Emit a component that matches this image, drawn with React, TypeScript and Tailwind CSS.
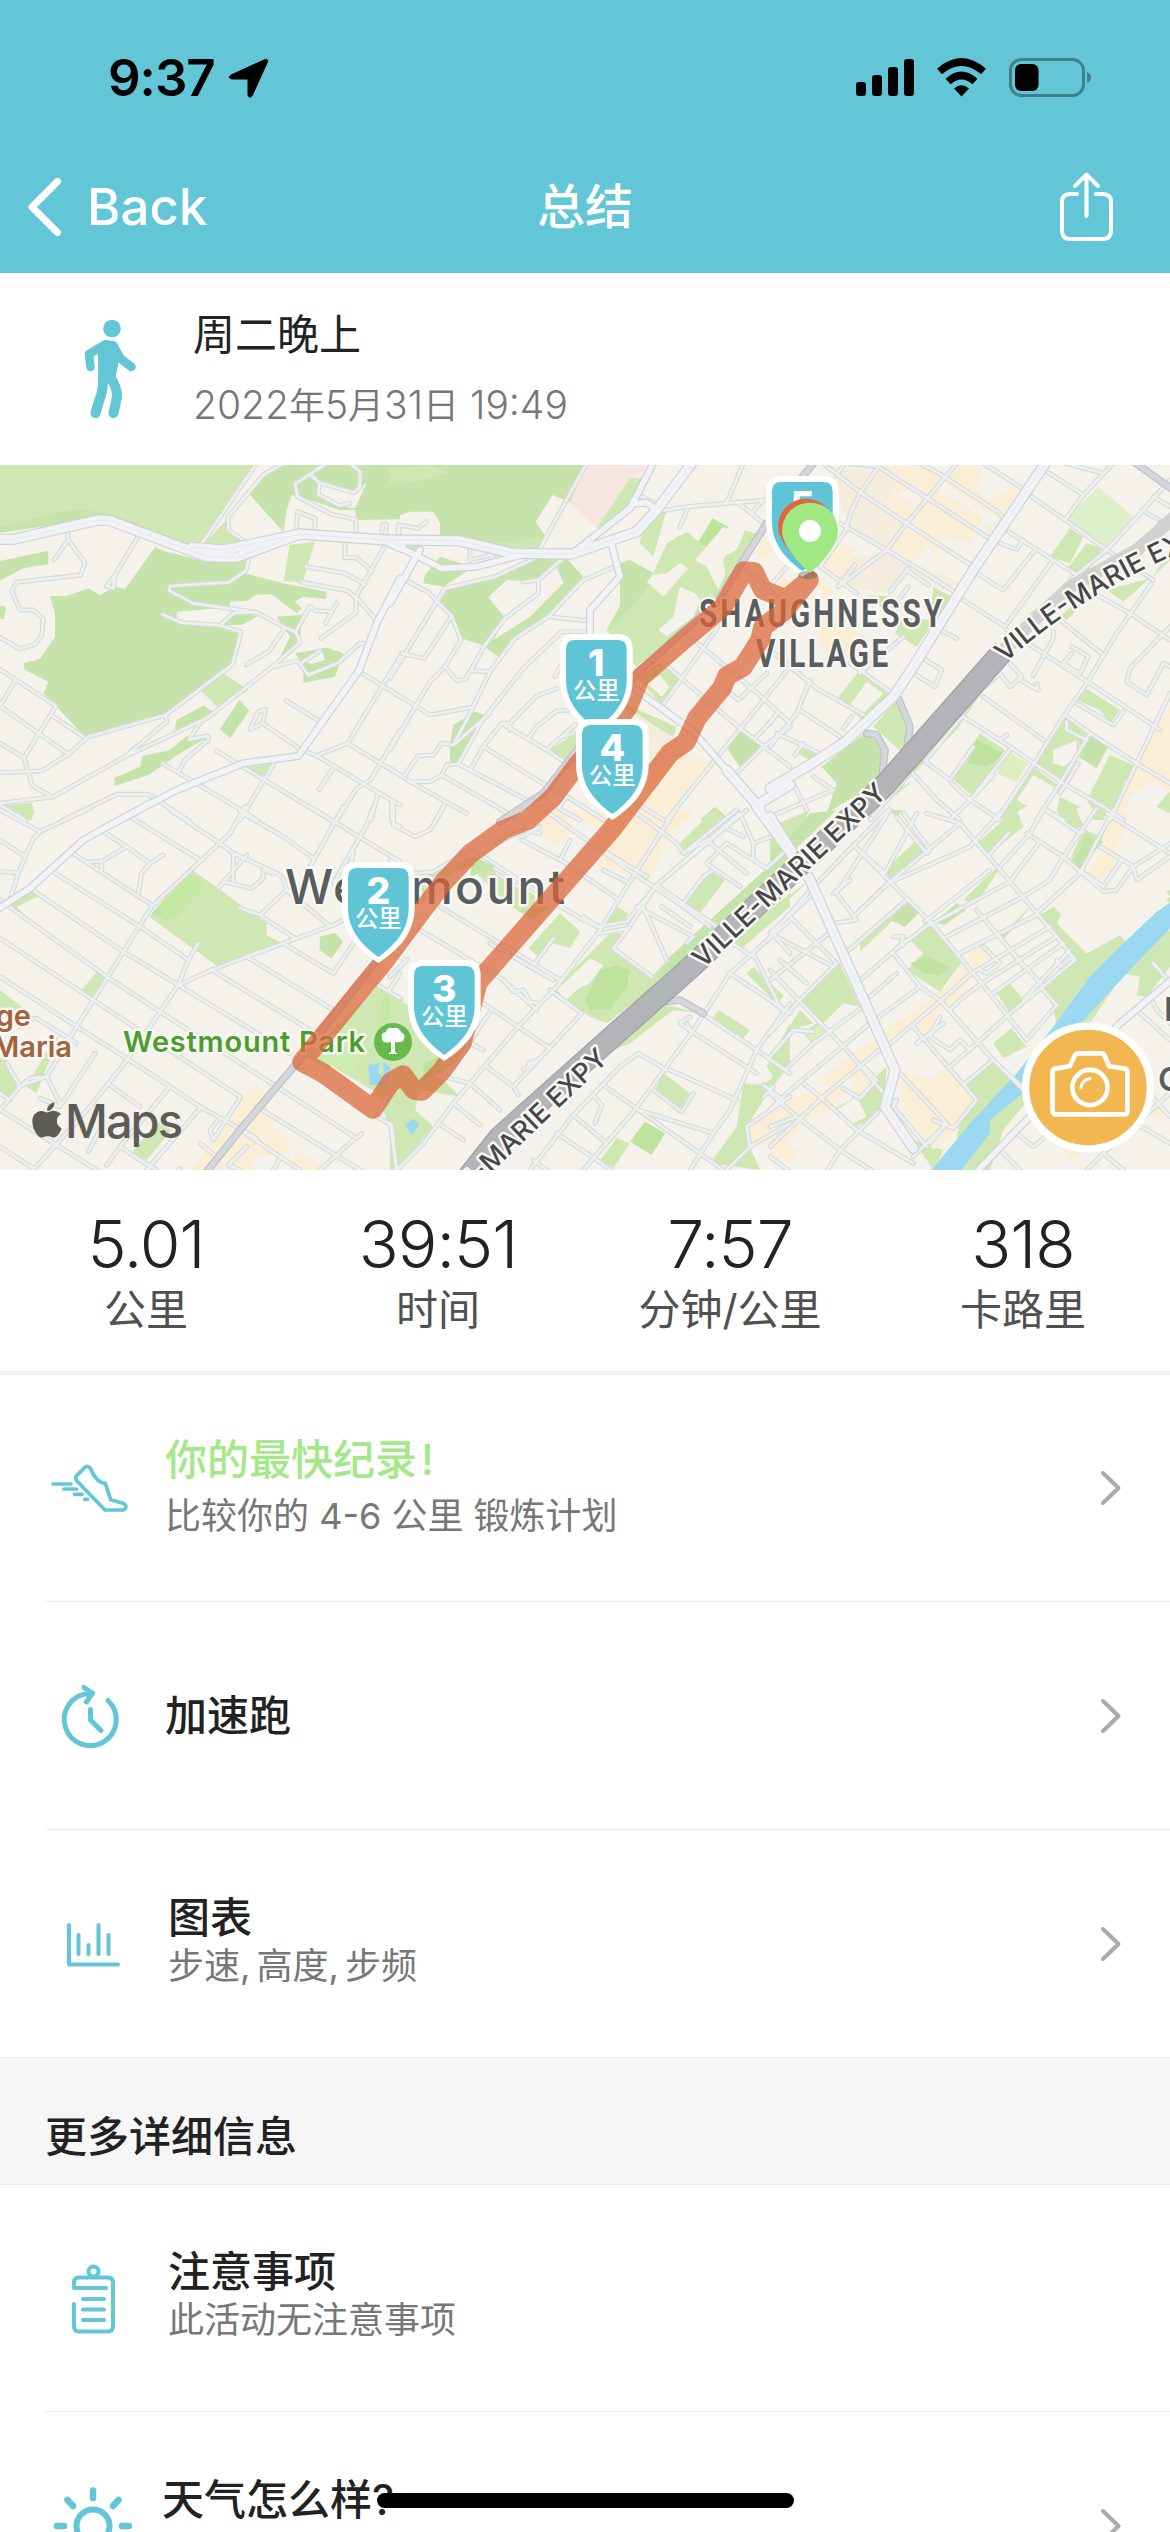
import React from "react";
import { FaApple } from "react-icons/fa";

type Area = { c: string; p: string[] };
type Tile = {
  x: number;
  y: number;
  areas: Area[];
  minor: string[];
  medium: string[];
  major: string[];
  grey: string[];
};

const G = "#c6e3ab";
const L = "#cfe7b3";
const B = "#faeed7";
const T = "#f4ecdd";
const K = "#f5f2eb";
const H = "#bde39d";
const W = "#9bd8f2";

/* Map geometry, one entry per tile; tile units are a third of a pixel. */
const tiles: Tile[] = [
  {
    x: 0,
    y: 460,
    areas: [
      { c: L, p: ["0,15 770,15 590,265 500,240 295,165 0,218", "600,262 690,170 690,210 750,250 680,270", "868,255 945,245 908,368 850,362", "600,690 670,640 745,690 660,748", "745,922 820,910 795,955", "15,1035 95,1028 103,1055 95,1080 75,1080"] },
      { c: G, p: ["0,218 0,200 60,190 170,155 250,150 320,160 400,185 500,240 560,255 300,175", "850,15 1200,15 1200,178 1070,180 1065,150 1020,150 900,110 875,105 860,150 850,215 750,105 790,45", "150,408 200,408 265,385 300,405 345,380 375,387 465,262 500,275 620,305 740,300 735,340 850,370 980,395 978,418 910,410 885,425 905,445 890,460 815,403 765,405 745,422 690,425 690,440 600,450 530,455 530,475 545,488 660,496 723,516 698,613 497,765 255,830 168,738 130,700 145,665 72,628 72,610 120,597 165,530 165,460", "0,303 145,272 145,312 70,325 0,362", "0,438 18,440 12,478 0,475", "525,810 530,780 610,737 650,762", "718,720 748,752 690,835 660,808", "342,955 420,920 428,888 510,870 560,828 625,830 540,880 445,945 345,978", "910,668 910,620 885,580 980,563 1030,580 1005,650", "830,470 905,465 900,548 830,610 870,530", "670,495 700,460 775,468 725,495"] },
      { c: K, p: ["960,75 1060,100 1100,68 1065,145 1018,137 955,103", "700,180 750,108 845,215 750,250 690,210", "770,290 868,258 850,370 772,325", "905,600 965,570 975,600 935,612"] },
    ],
    minor: ["770,10 598,262", "850,10 790,45 685,170 685,210 755,258", "980,10 885,72 893,110 995,163 1068,178 1068,225", "1050,10 1080,35 1080,80 1062,98 958,68 932,45", "958,68 955,103 1018,137 1050,130", "888,220 893,155 945,175 945,220", "1145,225 1148,195 1160,195 1155,225", "1195,225 1200,198", "200,205 205,240 162,300", "205,240 255,308 242,345 50,367 35,392 60,450 100,450 130,477 125,528 104,553 60,567 0,532", "413,232 345,345 320,378 340,385 345,345", "755,258 738,332 687,367 510,378 508,392 580,430 770,457 855,503 887,515 900,547 815,622 620,775 375,890 160,1010 0,1030", "487,463 545,488 660,496 723,516 698,613 497,765 265,830 205,883 125,933 0,938", "660,496 703,458 770,457", "855,503 808,573 740,614", "497,765 500,785 375,890", "815,622 893,602 925,645 1015,608 1080,550 1100,552", "905,608 960,573", "887,515 930,438 945,452 995,455 1010,430", "995,455 977,490", "0,628 168,738 72,893 97,977 155,1010", "45,662 0,738 205,883", "153,765 250,830", "0,850 72,893", "918,320 1035,340 1095,373", "905,367 1043,392 1068,415 1068,458 963,535", "1035,245 1035,293 1070,293 1115,333", "1158,252 1068,410 1135,488", "1200,590 1043,850 950,887 905,870 788,790 750,808 775,755 797,748 788,790", "1078,635 1200,710", "858,722 958,783", "1043,850 1200,945", "950,887 1088,970 1200,1035", "1003,920 958,988", "1200,810 1113,958 1070,985 1010,1080", "1135,998 1113,1080", "1180,1025 1180,1080", "650,873 720,915 1000,1085", "825,905 720,1080", "600,790 567,838 625,828 625,840 555,900 535,935", "487,910 590,970 740,1060 770,1080", "190,1080 350,1003 445,1003 570,1085", "0,1035 75,1080"],
    medium: ["1200,355 1130,490 1078,630 895,888 730,910 530,990 350,1085"],
    major: ["-10,238 40,238 295,180 330,182 620,290 710,292 900,222 1158,240 1205,262", "575,262 670,270 900,222"],
    grey: [],
  },
  {
    x: 390,
    y: 460,
    areas: [
      { c: "#f7e5e1", p: ["590,15 775,15 745,50 620,205 535,125"] },
      { c: L, p: ["720,55 755,55 715,150 620,205", "690,310 720,300 790,340 830,250 890,215 920,240 1000,290 1040,270 1065,210 1110,225 985,420 740,620 730,610 650,510 690,435", "750,250 760,185 830,150 790,290", "700,730 860,800 850,830 715,765", "740,650 815,605 875,665 815,735", "475,870 560,820 560,915", "0,240 90,255 75,275"] },
      { c: G, p: ["0,15 590,15 540,125 487,105 437,185 472,238 450,275 370,270 150,235 150,190 130,155 60,155 0,175", "150,425 170,390 310,350 435,295 525,290 580,350 475,460 375,535 325,590 275,555 215,535 185,468", "100,370 105,345 150,290 250,320 160,380", "690,310 720,300 790,340 760,400 650,520 690,440", "1055,810 1118,860 1055,930 1012,865", "180,850 190,795 255,755 285,765 205,910 180,905"] },
      { c: H, p: ["968,175 1015,200 962,270 925,245"] },
      { c: K, p: ["295,412 350,360 445,365 445,400 345,472", "500,320 520,370 420,470 310,540 345,480 450,400 450,360", "770,365 790,345 830,340 870,310 895,325 820,410", "805,510 850,470 870,380 915,400 930,420 910,470 830,530", "915,300 1000,200 1040,220 1010,280 1000,300 1005,345 985,390 950,320", "770,670 810,645 838,680 815,710"] },
      { c: L, p: ["0,25 120,15 175,40 60,70 0,70", "240,260 460,232 450,275"] },
      { c: B, p: ["860,870 960,905 850,1045 915,1080 690,1080 770,960", "1165,345 1200,360 1200,400 1140,375", "1115,235 1150,260 1130,300 1095,280", "440,1060 500,1020 520,1080 430,1080"] },
      { c: T, p: ["700,790 740,760 860,840 870,880 790,930 770,920"] },
      { c: G, p: ["975,1040 1020,1080 930,1080"] },
    ],
    minor: ["590,10 450,265", "0,690 120,765 245,742", "45,360 115,397 185,468 213,540 165,620 120,665 0,870", "140,425 0,655", "35,580 103,595 185,468", "435,295 315,350 165,385 140,425", "525,290 445,360 445,400 345,475 285,555 242,632 225,658 200,662 165,620", "445,360 400,366", "675,320 580,360 475,470 375,535 300,635 240,760 190,855 155,850 130,885 85,887 45,945", "190,855 300,760", "242,632 300,635", "475,470 600,483", "600,515 515,515 400,625 275,785 205,912 170,915 155,945 120,965 60,965 0,925", "500,685 440,708 360,790 335,790 280,860 240,930", "495,650 510,620", "335,790 470,870", "360,790 360,810", "550,750 500,752 440,800 415,835", "550,820 520,830", "555,795 520,825 470,870 560,930", "280,860 490,990 540,1015 640,1080", "205,912 430,1030", "155,945 380,1075", "60,965 230,1060", "5,1020 5,1080", "165,1030 135,1085", "530,1010 505,1045 570,1080", "745,105 795,130", "1060,10 1010,130", "800,155 890,140 1130,120", "895,140 870,200", "1040,125 1120,190", "1120,120 1085,160", "25,230 25,195 85,205 110,185", "240,255 240,300 320,280", "300,300 320,270", "815,605 1050,805 1200,920", "900,530 1120,715 1200,790", "985,500 815,740", "1130,640 1045,720 1010,690", "1200,620 1120,720 975,900 830,1080", "1160,765 1095,835", "1200,800 1120,860 1030,950", "740,1030 820,1080", "1070,330 1160,410", "1200,310 1120,400"],
    medium: ["0,248 155,325 260,320 430,275", "90,270 0,430", "665,255 690,350 600,450 600,530", "740,690 910,815 1010,930 1110,1045", "545,282 720,145 790,10", "740,130 770,128 800,150"],
    major: ["-5,240 205,242 370,280 545,282 740,215 800,150 905,10", "1100,1035 1200,975", "1010,930 1110,1045"],
    grey: ["1130,190 985,420 740,640 460,1000 330,1085"],
  },
  {
    x: 770,
    y: 460,
    areas: [
      { c: T, p: ["185,20 380,15 370,90 430,165 350,290 240,200 200,100", "220,290 350,280 580,370 520,390 420,330 360,400 200,380", "640,190 700,190 660,240"] },
      { c: B, p: ["360,15 490,20 510,55 470,100 400,90 370,110", "550,15 640,20 620,90 660,120 740,80 745,110 700,180 600,130 520,60", "490,80 640,170 600,250 530,230 500,290 420,200 440,130", "400,200 470,240 440,310 360,265", "155,260 255,260 230,320 200,360 150,310", "370,100 430,130 410,190 345,150", "140,360 190,390 160,420", "130,440 300,540 220,600 150,560"] },
      { c: "#ddf0cb", p: ["985,80 1090,170 1010,265 885,180"] },
      { c: L, p: ["900,205 940,230 900,310 840,290", "950,250 995,265 930,370 890,330", "930,345 800,450 740,490 820,430", "1010,390 1140,355 1060,425", "490,380 545,410 440,560 375,520 400,470 480,480", "300,405 370,410 350,460", "270,630 360,700 275,780 205,710", "380,720 410,790 400,880 310,800", "80,880 100,855 155,890 130,905", "630,820 705,870 610,1010 540,950", "880,770 960,810 870,960 795,910", "1020,885 1100,920 1060,970 1070,1020 990,1080 950,1020", "790,920 870,980 700,1080 690,1080", "940,680 1050,750 1020,790 990,750 920,720", "870,1010 930,1040 880,1080 860,1050", "500,860 640,690 560,810 420,950 440,900", "430,960 290,1080 380,990", "980,1060 1010,1080 960,1080", "1200,990 1200,1060 1160,1040", "870,470 960,390 930,440 890,480", "1145,355 1200,270 1200,300"] },
      { c: G, p: ["155,920 290,815 345,870 335,960 170,1060 200,970", "960,820 1015,860 980,925 925,890"] },
      { c: H, p: ["620,840 700,880 650,920 595,910"] },
      { c: "#dfedc0", p: ["715,875 775,910 740,965 680,940"] },
      { c: B, p: ["1200,740 1200,1000 1150,960 1080,1010 1060,1080 1030,1080 1100,900"] },
      { c: K, p: ["290,665 340,700 275,765 240,735", "850,870 920,840 920,890 880,920 850,910", "790,945 860,985 790,1050 740,1020"] },
    ],
    minor: ["165,15 275,100 410,190 610,320", "325,20 465,110 665,240", "450,10 515,45 690,160 705,185", "325,20 270,100 245,150 225,215 150,320", "560,10 410,190 350,270 205,380", "200,45 225,10", "240,10 325,20", "210,190 350,270 475,345 560,400", "150,320 260,400", "410,330 475,375", "415,325 360,395", "415,380 370,440", "255,315 205,380", "640,10 780,100", "830,35 940,105", "785,110 885,180", "1030,10 940,105 885,180", "885,10 1000,40", "885,180 1010,270 1150,360", "1200,60 1120,150 1010,270 900,360", "715,215 850,300 960,370", "690,250 740,268 760,240", "795,270 700,390 605,330", "850,300 705,500 580,420", "920,370 1080,460 1200,540", "870,480 1000,585", "1145,370 1040,520 950,670 880,770 790,915 680,1080", "1115,150 1200,200", "1150,110 1200,140", "710,510 820,580 960,670 1170,810", "850,515 850,535 790,645", "905,560 955,590 930,640 880,610 905,580", "640,710 820,840", "620,700 690,640 720,680 755,650 720,610", "575,770 465,905 540,960 610,860", "580,770 690,840 880,970 1000,1040 1060,1080", "690,840 710,825", "750,660 805,690 800,670", "1180,610 1130,705 1070,665 1080,625 1200,500", "1180,610 1200,620", "885,765 960,820 1100,910 1200,970", "960,820 870,970 800,1080", "1200,700 1100,910 1020,1080", "920,730 1030,795 1060,755", "720,870 600,1020 545,970", "925,910 870,1000", "890,785 890,810 950,840", "450,590 515,630 495,680 430,640", "240,610 360,695", "0,570 140,685 290,770", "400,530 270,640", "120,660 80,760 0,860", "90,750 210,830", "20,760 0,790", "220,805 245,770", "20,820 160,885", "75,885 100,850", "510,510 560,535", "410,920 500,1020 570,1080", "420,940 300,1080", "670,945 600,1020 540,1080", "70,970 110,1050", "0,1070 190,990 130,950", "600,1020 690,1080", "820,1045 880,1080"],
    medium: [],
    major: ["830,5 610,330 430,620 370,710 220,850 110,920 0,985"],
    grey: ["130,10 90,60", "1090,5 1210,90", "385,715 420,800 410,870", "290,820 320,825 345,870 335,960", "1175,190 1165,240"],
  },
  {
    x: 0,
    y: 810,
    areas: [
      { c: L, p: ["448,320 570,175 800,340 800,375 845,400 660,475", "25,290 90,235 115,260 50,290 80,325", "290,485 318,502 275,560 240,545", "0,540 110,625 0,600", "0,720 70,830 30,865 0,850", "180,670 110,850 80,830 130,740", "1130,530 1210,565 1210,850 1140,870 920,740", "1140,870 1210,820 1210,980 1160,930", "395,1030 470,935 515,960 440,1050", "35,0 100,0 85,35"] },
      { c: G, p: ["960,380 1005,368 1030,395 995,445 958,420", "455,310 500,260 530,320 500,330"] },
      { c: "#c5e9a3", p: ["478,290 570,190 605,210 605,240 530,320 490,325", "1150,550 1200,580 1200,640 1135,640"] },
      { c: "#cdecaf", p: ["925,735 1040,640 1100,700 1060,790 980,770"] },
      { c: K, p: ["990,765 1125,845 1100,870 980,800"] },
      { c: B, p: ["760,825 800,850 800,890 810,940 870,1000 860,1030 760,1040 760,1080 570,1080 680,950", "890,1025 965,1065 960,1080 870,1080 880,1050"] },
      { c: W, p: ["1105,765 1140,760 1135,790 1150,800 1150,755 1172,775 1160,825 1110,825"] },
    ],
    minor: ["0,90 75,140", "0,0 120,65 270,-5", "120,65 100,85 55,190 30,270", "0,185 55,188", "390,20 600,150", "735,-10 690,70 600,155 455,290 280,570 230,650 140,800 55,830", "510,0 660,100", "720,5 850,80 940,145", "930,-10 1060,70 1200,155", "1030,-10 930,170", "1120,-10 1100,45 1000,220", "1180,-10 1180,40 1200,50", "1060,130 1050,170", "310,65 380,110 450,160 490,135", "450,160 425,190 415,250", "380,110 305,155 265,155", "305,155 305,180", "215,128 455,285", "150,180 420,350 565,450 595,400", "90,235 370,425 535,525 870,730", "0,270 320,500 480,605 830,830", "0,385 280,570 720,860", "0,500 230,650 380,745 510,830 600,890 770,985", "565,450 535,525 385,745 270,890 100,1080", "535,525 635,480 740,440 850,400 1000,345 1050,320", "635,480 980,690", "740,440 1000,600", "720,295 780,315 885,385", "780,315 860,240 850,205 830,190", "850,400 1000,490", "1100,505 1200,565", "1080,370 1000,490", "860,240 985,345", "700,130 700,220", "740,135 655,235", "660,100 700,130 830,190", "670,215 755,235 790,205 790,180 820,190", "0,850 30,870", "0,900 60,830 20,760", "60,830 90,805 140,800 180,880", "285,730 180,890", "110,625 230,700", "100,625 60,650", "330,825 420,890", "0,900 290,1080", "120,865 180,890", "510,830 360,1010 320,1065", "300,960 265,1025", "360,1010 420,1050 470,1080", "600,895 440,1080", "600,1000 650,1040", "0,1010 100,1075", "720,865 640,990 630,960 655,930", "770,890 1080,1080", "720,960 900,1080", "740,1010 685,1065 720,1080", "840,1045 820,1080", "830,830 1070,985 1085,970", "1060,990 960,1080", "1160,860 1130,920 1175,945 1190,1080", "1200,490 1165,545", "540,1075 530,1085"],
    medium: ["450,-20 385,15 250,90 90,235 -10,300"],
    major: [],
    grey: ["1130,450 890,760 720,960 620,1085"],
  },
  {
    x: 390,
    y: 810,
    areas: [
      { c: L, p: ["0,550 75,600 240,700 150,800 210,860 90,840 75,900 130,950 20,1080 0,1080", "120,190 250,140 390,225 480,290 430,330 350,280 240,170 180,190 100,280 80,240", "510,310 570,365 540,415 490,400 440,435 415,415", "490,540 660,370 710,370 670,415 785,500 840,440 960,330 960,400 650,640 600,620 540,575", "640,350 680,290 715,310 700,340", "960,180 1005,210 930,310 885,285", "870,100 970,0 1000,20 880,130", "1200,290 1050,420 1020,400 1200,250", "650,730 830,585 930,610 850,600 720,700", "820,790 900,850 870,900 790,850", "985,600 1080,660 1060,685 965,630", "1090,470 1180,560 1160,580 1070,490", "680,985 720,1000 670,1075 630,1050", "1200,640 1130,770 1150,800 1120,825 1060,820 1040,950 960,1060 1110,1080 1080,1010 1070,950 1120,870 1200,760"] },
      { c: G, p: ["250,140 320,170 240,200", "960,330 1200,110 1200,190 900,440 800,510 840,440", "480,290 430,330 380,300"] },
      { c: H, p: ["765,935 825,970 785,1035 720,995", "600,540 630,480 680,465 720,480 710,530 660,600 600,600 585,570", "100,760 150,740 150,790 100,810"] },
      { c: K, p: ["500,540 600,445 640,465 600,520 560,540 530,570"] },
      { c: B, p: ["450,0 910,0 860,60 840,70 780,210 625,170 640,110 530,80 520,110 450,80", "1070,950 1110,920 1200,860 1200,1040 1150,1000 1080,1000"] },
      { c: K, p: ["560,20 640,60 600,110 520,110"] },
      { c: W, p: ["45,945 70,925 88,945 65,975"] },
    ],
    minor: ["10,0 10,45 75,80 120,60 160,-5", "0,150 75,190 130,185 240,120", "250,120 480,270 580,330 630,350", "320,190 400,240", "395,90 520,155 680,265", "450,70 400,60 320,100", "540,90 510,150", "450,-10 730,190 880,290 960,350", "395,80 450,50", "640,180 710,215", "860,-5 735,190 630,360 500,530 380,655 190,880 100,1000 20,1080", "150,290 510,510", "90,360 340,510 440,600", "340,510 370,545 400,540 420,575 445,580", "300,400 490,510", "490,385 435,460", "580,320 620,350 710,335 800,225 1070,0", "630,370 715,355 670,415 785,500", "800,225 715,355", "740,290 910,380 890,400", "815,290 900,350", "800,225 980,350", "620,110 770,200", "715,-10 860,100 880,130 1040,0", "760,290 830,450", "880,130 950,90 1070,190", "830,200 990,60 1050,10", "880,280 940,200 970,180", "1050,10 1090,100 1090,150 1130,175", "1010,100 950,160 1050,230", "1010,100 1130,175 1190,120", "1000,50 1060,80", "1090,100 1145,80", "480,540 575,610 370,830 385,855", "280,580 480,715", "400,780 440,750 415,760", "300,605 180,790", "280,720 240,700", "290,770 370,830", "140,795 240,820 330,900", "190,880 270,945", "145,940 220,990", "0,500 50,450 0,430", "0,940 20,1080", "1200,330 1150,375 1020,490 910,660 735,900 580,1080", "935,610 1100,720 1200,790", "1020,490 1200,610", "1150,375 1200,430", "1200,580 1100,720 1020,900 970,970 900,1080", "890,640 905,665 870,640 900,620", "1090,430 1175,600", "1010,390 1090,440", "840,780 1040,870", "690,770 745,730 830,780", "640,825 745,900 930,1030 1000,1080", "690,770 550,915 420,1080", "550,915 650,1000", "790,840 875,905 910,850", "745,900 970,970", "500,970 620,1050 660,1080", "430,1050 470,1080", "610,855 635,885 615,940", "1200,940 1080,1010 1010,1080", "1080,1010 1070,950 1200,860", "1120,825 1180,870", "905,665 1100,790", "1120,860 1150,830"],
    medium: [],
    major: ["1100,-10 1210,140"],
    grey: ["820,575 870,570 940,610"],
  },
  {
    x: 770,
    y: 810,
    areas: [
      { c: L, p: ["480,345 580,450 510,545 410,480 460,430 420,390", "270,400 420,270 445,310 400,350 370,330 270,425", "500,340 560,280 590,300 520,345", "580,270 650,200 700,160 620,280", "690,380 790,280 700,390", "620,100 690,40 740,0 760,50 650,140", "0,50 120,0 0,200", "345,180 440,90 465,130 360,210", "90,570 210,460 270,590 220,580 160,640", "100,670 140,640 180,670 130,705", "0,740 90,600 130,640 60,660 0,760", "0,520 40,555 20,580 0,570", "820,540 920,450 800,320 850,290 880,320 870,350 950,430 1050,375 1070,400 1200,360 1200,470 1130,560 1100,555 1110,500 1060,490 960,640 700,960 660,1080 580,1080 480,1080 560,990 580,820 670,755 730,810 860,650 850,590", "670,700 725,655 770,710 700,745", "680,550 720,520 760,570 720,610", "540,910 590,870 620,880 560,940", "185,900 240,870 350,770 340,900 260,950", "430,990 520,1020 490,1080", "880,0 920,0 940,50 900,60", "940,60 1000,80 970,130 920,170 900,150", "1170,250 1200,240 1200,280", "130,200 0,320 0,300", "350,0 400,0 380,20"] },
      { c: G, p: ["0,190 200,0 120,10 60,80 0,120", "360,330 420,275 445,310 405,350", "500,330 560,280 580,300 525,345", "940,65 1000,95 930,175 905,160 940,100"] },
      { c: H, p: ["420,460 470,440 540,470 510,495 460,490"] },
      { c: K, p: ["860,340 950,430 1060,370 1200,260 1180,230 1000,250 930,200", "200,900 260,860 290,920 250,940"] },
      { c: B, p: ["150,810 340,660 500,560 600,450 590,550 540,590 350,690 240,800 170,830", "430,650 500,610 480,670", "595,430 640,400 655,440 610,475", "240,800 280,770 320,810 270,865", "0,880 150,840 240,830 180,900 120,920 60,990 0,950", "0,980 85,1020 60,1060 0,1040", "390,780 480,810 530,770 620,870 550,970 490,1020 400,900", "1010,40 1080,0 1060,70 1030,130 1000,110", "950,190 1000,120 1050,160 1010,220", "375,900 430,980 440,1010", "1120,900 1180,870 1180,930", "880,1020 1000,990 900,1050"] },
      { c: "#dfedc0", p: ["105,670 150,645 175,670 130,700"] },
      { c: W, p: ["1205,275 1160,305 1065,395 1020,440 960,500 850,650 740,790 600,940 560,990 490,1075 490,1085 570,1085 660,970 660,930 770,840 950,620 1080,480 1205,350"] },
    ],
    minor: ["355,0 130,230 0,380", "400,10 480,120 470,130 380,20", "440,10 345,190 250,105", "250,105 480,335 635,520 715,620 770,690 860,585 815,535", "570,40 720,215 860,380 915,450", "820,-5 930,70 940,65", "370,430 410,480 450,530 515,575 670,750 760,835", "80,565 230,720 350,860", "0,370 190,470", "60,320 200,460", "430,650 620,870 550,955 490,930", "30,450 110,520", "0,570 40,600", "0,850 80,920 210,1020 310,1085", "100,820 150,860 260,960 430,1060", "390,790 530,940 480,1000", "370,890 470,1010", "470,10 570,40 360,215", "690,10 600,110 365,215", "360,0 200,250 260,330 190,340", "190,250 240,210", "250,320 360,215", "410,270 220,435", "660,180 465,335", "480,340 390,410 400,380 370,380", "410,390 260,520", "720,215 480,345", "810,95 720,215", "715,70 660,130", "690,170 780,70 820,0", "760,260 520,385", "800,315 560,435", "840,350 605,490 515,570 350,710", "860,380 635,520 570,570 540,600", "880,400 670,550", "900,420 760,570", "915,450 720,610 620,700 540,770", "860,450 870,470 910,440", "670,750 580,825", "620,300 730,430 820,530", "690,380 760,470", "640,410 690,460 650,490 630,480", "380,490 300,560", "980,-5 880,140 840,210 760,260", "1030,0 930,190 800,310", "770,70 880,140 1000,245 1040,240 1090,170 1200,100", "930,180 1000,230 1055,150", "1010,10 1200,130", "990,110 1090,170 1100,210 1200,140", "280,590 130,700 45,780", "300,640 50,850 0,900", "340,710 160,860 0,1010", "450,530 300,640", "510,620 480,680 540,720 570,690 600,720", "520,640 440,700", "0,740 70,660 130,665", "200,460 90,570 0,670", "0,510 190,360", "0,480 80,565", "130,250 0,370", "530,940 430,1040", "325,905 210,1020 170,1085", "220,835 270,865 320,810 280,770", "0,950 80,920", "0,1040 60,1085", "690,1020 750,1080", "740,970 790,1010 900,920", "1200,850 1000,1030 950,1080", "1100,600 1200,690", "1150,460 1190,505", "1140,560 1160,600 1200,640", "1080,930 1200,1000", "1120,830 1200,920", "340,890 380,870 370,890", "1000,1030 1060,1080", "670,750 755,835"],
    medium: ["1210,505 1050,640 620,1085"],
    major: ["0,20 50,100 120,210 290,590 375,780 345,890 430,1015"],
    grey: [],
  },
];

const place = (t: Tile) => `translate(${t.x} ${t.y}) scale(0.33333)`;

function Layer({ k, color, width }: { k: "minor" | "medium" | "major" | "grey"; color: string; width: number }) {
  return (
    <g fill="none" stroke={color} strokeWidth={width} strokeLinecap="round" strokeLinejoin="round">
      {tiles.map((t, i) => (
        <g key={i} transform={place(t)}>
          {t[k].map((p, j) => (
            <polyline key={j} points={p} />
          ))}
        </g>
      ))}
    </g>
  );
}

function Marker({ x, y, n, unit = true }: { x: number; y: number; n: string; unit?: boolean }) {
  return (
    <g transform={`translate(${x} ${y}) scale(0.33333)`}>
      <path fill="#fff" d="M0 45Q0 0 45 0H173Q218 0 218 45V135C218 215 170 262 109 303C48 262 0 215 0 135Z" />
      <path fill="#5fc5d6" d="M18 46Q18 18 46 18H172Q200 18 200 46V137C200 203 160 248 109 285C58 248 18 203 18 137Z" />
      <text x="109" y="127" textAnchor="middle" fontSize="112" fontWeight="800" fill="#fff">{n}</text>
      {unit && (
        <text x="109" y="194" textAnchor="middle" fontSize="70" fontWeight="500" fill="#fff" className="font-['Noto_Sans_CJK_SC',sans-serif]">公里</text>
      )}
    </g>
  );
}

const halo = { paintOrder: "stroke" as const, stroke: "#f8f7f3", strokeWidth: 5, strokeLinejoin: "round" as const };

function RouteMap() {
  return (
    <svg className="block h-[705px] w-[1170px] font-[Inter,'Noto_Sans_CJK_SC',sans-serif]" viewBox="0 465 1170 705">
      <rect y="465" width="1170" height="705" fill={K} />
      {tiles.map((t, i) => (
        <g key={i} transform={place(t)}>
          {t.areas.map((a) => a.p.map((p, j) => <polygon key={a.c + j} points={p} fill={a.c} />))}
        </g>
      ))}
      <Layer k="minor" color="#d6dad8" width={15} />
      <Layer k="minor" color="#edf0f0" width={8} />
      <Layer k="medium" color="#cfd1d4" width={24} />
      <Layer k="grey" color="#bfc0c5" width={23} />
      <Layer k="major" color="#cfd1d4" width={34} />
      <Layer k="grey" color="#d5d6db" width={16} />
      <Layer k="medium" color="#f1f2f5" width={17} />
      <Layer k="major" color="#f1f2f5" width={27} />
      <Layer k="major" color="#e6e9ed" width={3} />

      <g fill="none" strokeLinejoin="round">
        <polyline points="1180,512 1137,550 1070,587 1027,627 997,657" stroke="#d0d1d0" strokeWidth="13" />
        <polyline points="1004,650 885,785 690,968 603,1045 500,1137 466,1180" stroke="#9fa0a4" strokeWidth="23" />
        <polyline points="1004,650 885,785 690,968 603,1045 500,1137 466,1180" stroke="#b3b4b8" strokeWidth="20.500" />
      </g>

      <g fill="#454648" fontSize="27" fontWeight="500" {...halo}>
        <path id="expy-a" d="M1005 663Q1080 595 1190 548" fill="none" stroke="none" />
        <path id="expy-b" d="M703 969L890 793" fill="none" stroke="none" />
        <path id="expy-c" d="M430 1234Q508 1155 614 1056" fill="none" stroke="none" />
        <text><textPath href="#expy-a" textLength="250">VILLE-MARIE EXPY</textPath></text>
        <text><textPath href="#expy-b" textLength="254">VILLE-MARIE EXPY</textPath></text>
        <text><textPath href="#expy-c" textLength="250">VILLE-MARIE EXPY</textPath></text>
      </g>

      <g fontFamily="Roboto, sans-serif" fontSize="39" fontWeight="700" fill="#595d5e" {...halo}>
        <text transform="translate(699 627) scale(.76 1)" textLength="320">SHAUGHNESSY</text>
        <text transform="translate(756 667) scale(.76 1)" textLength="174">VILLAGE</text>
      </g>
      <text x="285" y="904" fontSize="48" fontWeight="500" fill="#595d5e" textLength="280" {...halo}>Westmount</text>
      <text x="123" y="1052" fontSize="29" fontWeight="600" fill="#4c9c2e" textLength="242" {...halo}>Westmount Park</text>
      <g fontSize="29" fontWeight="600" fill="#a0633c" {...halo}>
        <text x="31" y="1026" textAnchor="end">ge</text>
        <text x="72" y="1057" textAnchor="end">Maria</text>
      </g>
      <g fontSize="33" fontWeight="600" fill="#595d5e" {...halo}>
        <text x="1164" y="1021">N</text>
        <text x="1158" y="1091">C</text>
      </g>

      <circle cx="393" cy="1042" r="19" fill="#68b94c" />
      <path fill="#fff" d="M391 1052V1042Q382 1044 382 1038Q380 1033 386 1032Q387 1027 393 1028Q399 1027 401 1032Q406 1035 404 1039Q403 1043 395 1042V1052L398 1054H388Z" />

      <polyline
        fill="none"
        stroke="#db663a"
        strokeOpacity=".73"
        strokeWidth="19.500"
        strokeLinecap="round"
        strokeLinejoin="round"
        points="809,580 786,599 763,590 754,572 744,571 733,590 723,607 680,643 640,678 628,707 607,733 577,765 553,797 528,820 503,830 470,854 443,883 410,927 380,967 363,987 302,1062 323,1073 373,1109 391,1082 403,1075 414,1090 422,1091 440,1073 462,1043 478,982 612,829 647,783 670,753 686,742 697,718 722,688 727,676 743,667 760,640 763,627 783,612 809,580"
      />

      <FaApple x={27} y={1100} size={40} color="#5e5c57" />
      <text x="65" y="1138" fontSize="47" fontWeight="500" fill="#5e5c57" textLength="118">Maps</text>

      <Marker x={560} y={634} n="1" />
      <Marker x={342} y={862} n="2" />
      <Marker x={408} y={960} n="3" />
      <Marker x={576} y={719} n="4" />
      <Marker x={766} y={476} n="5" unit={false} />
      <g transform="translate(770 460) scale(0.33333)">
        <ellipse cx="114" cy="345" rx="30" ry="13" fill="#555" fillOpacity=".4" />
        <path fill="#e0673a" d="M108 328Q24 245 24 200A84 84 0 0 1 192 200Q192 245 108 328Z" />
        <path fill="#9fe883" d="M120 340Q36 262 36 212A84 84 0 0 1 204 212Q204 262 120 340Z" />
        <circle cx="120" cy="213" r="33" fill="#fff" />
      </g>
    </svg>
  );
}

function Chevron() {
  return (
    <svg className="mr-[48px] ml-auto h-[36px] w-[22px] shrink-0" viewBox="0 0 22 36" fill="none" stroke="#aaa" strokeWidth="4" strokeLinecap="round" strokeLinejoin="round">
      <path d="M3 3L18.500 18L3 33" />
    </svg>
  );
}

function IconCell({ top, children }: { top: number; children: React.ReactNode }) {
  return (
    <svg className="h-[227px] w-[160px] shrink-0" viewBox={`0 ${top} 160 227`} fill="none" stroke="#62c6d6" strokeWidth="5" strokeLinecap="round" strokeLinejoin="round">
      {children}
    </svg>
  );
}

function Rule() {
  return <div className="ml-[45px] h-px shrink-0 bg-[#ebebeb]" />;
}

const stats = [
  ["5.01", "公里"],
  ["39:51", "时间"],
  ["7:57", "分钟/公里"],
  ["318", "卡路里"],
];

export default function App() {
  return (
    <div className="relative flex h-[2532px] w-[1170px] flex-col overflow-hidden bg-white font-[Inter,'Noto_Sans_CJK_SC',sans-serif] text-[#222]">
      <header className="flex h-[273px] shrink-0 flex-col bg-[#62c6d6]">
        <div className="flex h-[156px] items-center pr-[78px] pl-[108px] text-black">
          <span className="text-[51px] leading-[62px] font-semibold tracking-[-1px]">9:37</span>
          <svg className="ml-[12px] h-[42px] w-[42px]" viewBox="228 57 42 42">
            <path d="M265 60Q270 58 268 63L253 96Q250 99 249 95V80Q249 79 248 79H233Q228 78 232 75Z" fill="#000" stroke="#000" strokeWidth="1" strokeLinejoin="round" />
          </svg>
          <svg className="ml-auto h-[42px] w-[236px]" viewBox="856 57 236 42">
            <rect x="856" y="82" width="10" height="14" rx="3" />
            <rect x="872" y="75" width="10" height="21" rx="3" />
            <rect x="888" y="67" width="10" height="29" rx="3" />
            <rect x="904" y="59" width="10" height="37" rx="3" />
            <g fill="none" stroke="#000" strokeWidth="7.500">
              <path d="M939.500 71.500Q961.500 52.500 983.500 71.500" />
              <path d="M948 81.500Q961.500 69.500 975 81.500" />
            </g>
            <path d="M954 88.500Q961.500 82 969 88.500L961.500 96.500Z" />
            <rect x="1010.500" y="59.500" width="73" height="36" rx="11" fill="none" stroke="#3f7f89" strokeWidth="3" />
            <rect x="1015" y="64" width="23.500" height="27" rx="6" />
            <path d="M1087 72Q1091 73.500 1091 77.500Q1091 81.500 1087 83Z" fill="#3f7f89" />
          </svg>
        </div>
        <div className="grid h-[102px] grid-cols-3 items-center text-white">
          <div className="flex items-center pl-[26px]">
            <svg className="h-[62px] w-[38px]" viewBox="0 0 38 62" fill="none" stroke="#fff" strokeWidth="7" strokeLinecap="round" strokeLinejoin="round">
              <path d="M31.500 5.500L6 31L31.500 56.500" />
            </svg>
            <span className="ml-[23px] text-[51px] leading-[62px] font-medium">Back</span>
          </div>
          <span className="text-center text-[48px] leading-[62px] font-medium">总结</span>
          <svg className="mr-[54px] h-[72px] w-[60px] justify-self-end" viewBox="1056 170 60 72" fill="none" stroke="#fff" strokeWidth="4" strokeLinecap="round" strokeLinejoin="round">
            <path d="M1077 193H1070Q1062 193 1062 201V229Q1062 238 1070 238H1103Q1111 238 1111 229V201Q1111 193 1103 193H1096M1086.500 215V174M1075 185L1086.500 173.500L1098 185" />
          </svg>
        </div>
      </header>

      <section className="flex h-[192px] shrink-0">
        <svg className="h-[192px] w-[193px] shrink-0" viewBox="0 273 193 192" fill="none" stroke="#62c6d6" strokeLinecap="round" strokeLinejoin="round">
          <circle cx="112" cy="328.500" r="8.800" fill="#62c6d6" stroke="none" />
          <path fill="#62c6d6" strokeWidth="5" d="M100 346Q107 340 115 345L117 358L113 377L101 378Z" />
          <path strokeWidth="8.500" d="M106 344L89 354L90.500 367M113 345L121 359L131.500 367" />
          <path strokeWidth="10" d="M103 373Q104 391 99 401L95.500 413M108 373Q118 388 117 397L113.500 413" />
        </svg>
        <div className="pt-[41px]">
          <div className="text-[42px] leading-[42px]">周二晚上</div>
          <div className="mt-[28px] text-[39px] leading-[42px] font-[350] whitespace-pre text-[#777]">
            2022<span className="text-[36px]">年</span>5<span className="text-[36px]">月</span>31<span className="text-[36px]">日</span> 19:49
          </div>
        </div>
      </section>

      <section className="relative h-[705px] shrink-0">
        <RouteMap />
        <button className="absolute top-[557px] left-[1022px] h-[131px] w-[132px]">
          <svg className="h-full w-full" viewBox="755 635 398 392" fill="none" stroke="#fff" strokeWidth="14" strokeLinecap="round" strokeLinejoin="round">
            <ellipse cx="954" cy="831" rx="188" ry="185" fill="#f2b750" strokeWidth="22" />
            <path d="M847 785Q847 776 856 774L899 767L914 735Q917 728 925 728H993Q1001 728 1004 735L1018 767L1064 774Q1073 776 1073 785V900Q1073 912 1061 912H859Q847 912 847 900Z" />
            <circle cx="960" cy="831" r="53" />
            <path strokeWidth="9" d="M933 832Q936 808 960 804" />
          </svg>
        </button>
      </section>

      <section className="grid h-[201px] shrink-0 grid-cols-[292px_292px_292px_294px] pt-[41px] text-center">
        {stats.map(([value, label]) => (
          <div key={label}>
            <div className="text-[66px] leading-[66px] font-[350] tracking-[-1px]">{value}</div>
            <div className="mt-[12px] text-[42px] leading-[42px] font-normal text-[#505050]">{label}</div>
          </div>
        ))}
      </section>
      <div className="h-[4px] shrink-0 bg-[#f0f0f4]" />

      <section className="flex h-[226px] shrink-0 items-center">
        <IconCell top={1375}>
          <g transform="translate(30 1430) scale(0.33333)" strokeWidth="11">
            <path d="M167 110L140 137Q134 144 140 152L225 240H279Q288 238 288 229Q287 223 280 220L242 209L226 160Q200 160 181 115Q176 107 167 110ZM69 162H123M102 177H140M133 193H156M164 208H173" />
          </g>
        </IconCell>
        <div className="ml-[5px]">
          <div className="text-[42px] leading-[56px] font-medium text-[#a5e889]">你的最快纪录<span className="ml-[4px]">!</span></div>
          <div className="text-[36px] leading-[56px] text-[#777]">比较你的 4-6 公里 锻炼计划</div>
        </div>
        <Chevron />
      </section>
      <Rule />
      <section className="flex h-[227px] shrink-0 items-center">
        <IconCell top={1602}>
          <path d="M108 1700.500A26 26 0 1 1 89.500 1693.500M84 1687.500L92.500 1693L86.500 1702M90.500 1709.500V1720L101 1730.500" />
        </IconCell>
        <div className="mt-px ml-[5px] text-[42px] leading-[56px] font-medium">加速跑</div>
        <Chevron />
      </section>
      <Rule />
      <section className="flex h-[227px] shrink-0 items-center">
        <IconCell top={1830}>
          <path strokeWidth="4" d="M69 1925V1964.500H118M78.500 1935V1954M88.500 1945V1954M98.500 1925V1954M108.500 1935V1954" />
        </IconCell>
        <div className="mb-[3px] ml-[8px]">
          <div className="text-[42px] leading-[49px] font-medium">图表</div>
          <div className="text-[36px] leading-[49px] [word-spacing:-4px] text-[#777]">步速, 高度, 步频</div>
        </div>
        <Chevron />
      </section>
      <div className="h-[128px] shrink-0 border-y border-[#ebebeb] bg-[#f6f6f6] pt-[58px] pl-[45px] text-[42px] leading-[42px] font-medium">更多详细信息</div>
      <section className="flex h-[226px] shrink-0 items-center">
        <IconCell top={2185}>
          <path strokeWidth="4" d="M106 2288H74V2283Q74 2277.500 79 2277.500H108Q113 2277.500 113 2283V2326Q113 2331.500 108 2331.500H79Q74 2331.500 74 2326V2304M83 2299H104M83 2309.500H104M83 2320H104" />
          <circle cx="93.500" cy="2271.500" r="5" strokeWidth="4" />
        </IconCell>
        <div className="mb-[5px] ml-[8px]">
          <div className="text-[42px] leading-[49px] font-medium">注意事项</div>
          <div className="text-[36px] leading-[49px] text-[#777]">此活动无注意事项</div>
        </div>
      </section>
      <Rule />
      <section className="flex h-[227px] shrink-0 items-center">
        <IconCell top={2412}>
          <circle cx="93" cy="2526" r="16.500" strokeWidth="6" />
          <path strokeWidth="6.500" d="M93 2490.500V2498M67.500 2500L73 2506M118.500 2500L113 2506M57 2526H64M122 2526H129" />
        </IconCell>
        <div className="mb-[52px] ml-[2px] text-[42px] leading-[49px] font-medium">天气怎么样?</div>
        <Chevron />
      </section>
      <div className="absolute bottom-[24px] left-[377px] h-[15px] w-[417px] rounded-full bg-black" />
    </div>
  );
}
